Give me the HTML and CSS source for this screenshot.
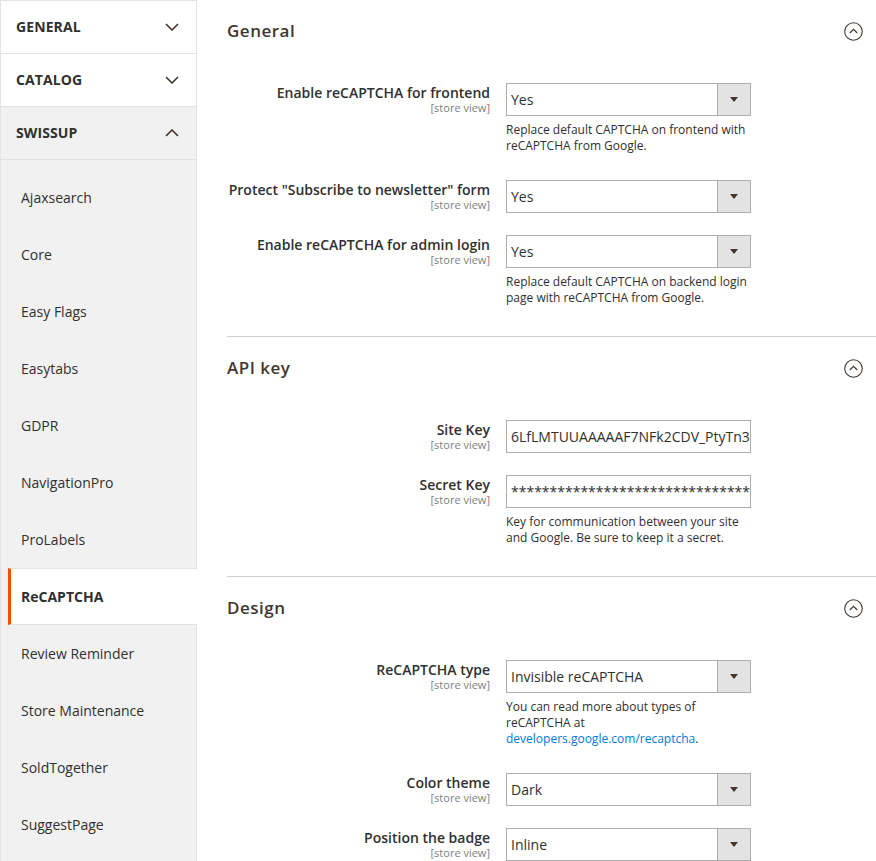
FILE: index.html
```html
<!DOCTYPE html>
<html lang="en">
<head>
<meta charset="utf-8">
<title>Configuration</title>
<link rel="stylesheet" href="styles.css">
</head>
<body>
<div class="page">
  <aside class="sidebar">
    <div class="tab">
      <span class="tab-name">GENERAL</span>
      <svg class="chev" width="14" height="8" viewBox="0 0 14 8"><path d="M1 1l6 6 6-6" fill="none" stroke="#41362f" stroke-width="1.6"/></svg>
    </div>
    <div class="tab">
      <span class="tab-name">CATALOG</span>
      <svg class="chev" width="14" height="8" viewBox="0 0 14 8"><path d="M1 1l6 6 6-6" fill="none" stroke="#41362f" stroke-width="1.6"/></svg>
    </div>
    <div class="tab tab-open">
      <span class="tab-name">SWISSUP</span>
      <svg class="chev" width="14" height="8" viewBox="0 0 14 8"><path d="M1 7l6-6 6 6" fill="none" stroke="#41362f" stroke-width="1.6"/></svg>
    </div>
    <ul class="subnav">
      <li class="item">Ajaxsearch</li>
      <li class="item">Core</li>
      <li class="item">Easy Flags</li>
      <li class="item">Easytabs</li>
      <li class="item">GDPR</li>
      <li class="item">NavigationPro</li>
      <li class="item">ProLabels</li>
      <li class="item item-active">ReCAPTCHA</li>
      <li class="item">Review Reminder</li>
      <li class="item">Store Maintenance</li>
      <li class="item">SoldTogether</li>
      <li class="item">SuggestPage</li>
    </ul>
  </aside>

  <main class="content">
    <section class="section">
      <div class="section-head">
        <h2 class="section-title">General</h2>
        <svg class="toggle" width="19" height="19" viewBox="0 0 19 19"><circle cx="9.5" cy="9.5" r="8.8" fill="none" stroke="#41362f" stroke-width="1.1"/><path d="M5.8 11l3.7-3.7 3.7 3.7" fill="none" stroke="#41362f" stroke-width="1.2"/></svg>
      </div>
      <div class="section-body">
        <div class="row">
          <div class="label"><span class="label-text">Enable reCAPTCHA for frontend</span><span class="scope">[store view]</span></div>
          <div class="control">
            <div class="select"><span class="select-value">Yes</span><span class="select-arrow"></span></div>
            <p class="note">Replace default CAPTCHA on frontend with reCAPTCHA from Google.</p>
          </div>
        </div>
        <div class="row">
          <div class="label"><span class="label-text">Protect "Subscribe to newsletter" form</span><span class="scope">[store view]</span></div>
          <div class="control">
            <div class="select"><span class="select-value">Yes</span><span class="select-arrow"></span></div>
          </div>
        </div>
        <div class="row">
          <div class="label"><span class="label-text">Enable reCAPTCHA for admin login</span><span class="scope">[store view]</span></div>
          <div class="control">
            <div class="select"><span class="select-value">Yes</span><span class="select-arrow"></span></div>
            <p class="note">Replace default CAPTCHA on backend login page with reCAPTCHA from Google.</p>
          </div>
        </div>
      </div>
    </section>

    <section class="section section-sep">
      <div class="section-head">
        <h2 class="section-title">API key</h2>
        <svg class="toggle" width="19" height="19" viewBox="0 0 19 19"><circle cx="9.5" cy="9.5" r="8.8" fill="none" stroke="#41362f" stroke-width="1.1"/><path d="M5.8 11l3.7-3.7 3.7 3.7" fill="none" stroke="#41362f" stroke-width="1.2"/></svg>
      </div>
      <div class="section-body">
        <div class="row">
          <div class="label"><span class="label-text">Site Key</span><span class="scope">[store view]</span></div>
          <div class="control">
            <div class="input">6LfLMTUUAAAAAF7NFk2CDV_PtyTn3xQwErTyUiOp</div>
          </div>
        </div>
        <div class="row">
          <div class="label"><span class="label-text">Secret Key</span><span class="scope">[store view]</span></div>
          <div class="control">
            <div class="input">****************************************</div>
            <p class="note">Key for communication between your site and Google. Be sure to keep it a secret.</p>
          </div>
        </div>
      </div>
    </section>

    <section class="section section-sep">
      <div class="section-head">
        <h2 class="section-title">Design</h2>
        <svg class="toggle" width="19" height="19" viewBox="0 0 19 19"><circle cx="9.5" cy="9.5" r="8.8" fill="none" stroke="#41362f" stroke-width="1.1"/><path d="M5.8 11l3.7-3.7 3.7 3.7" fill="none" stroke="#41362f" stroke-width="1.2"/></svg>
      </div>
      <div class="section-body">
        <div class="row">
          <div class="label"><span class="label-text">ReCAPTCHA type</span><span class="scope">[store view]</span></div>
          <div class="control">
            <div class="select"><span class="select-value">Invisible reCAPTCHA</span><span class="select-arrow"></span></div>
            <p class="note">You can read more about types of reCAPTCHA at <a class="link" href="#">developers.google.com/recaptcha</a>.</p>
          </div>
        </div>
        <div class="row">
          <div class="label"><span class="label-text">Color theme</span><span class="scope">[store view]</span></div>
          <div class="control">
            <div class="select"><span class="select-value">Dark</span><span class="select-arrow"></span></div>
          </div>
        </div>
        <div class="row">
          <div class="label"><span class="label-text">Position the badge</span><span class="scope">[store view]</span></div>
          <div class="control">
            <div class="select"><span class="select-value">Inline</span><span class="select-arrow"></span></div>
          </div>
        </div>
      </div>
    </section>
  </main>
</div>
</body>
</html>
```

FILE: styles.css
```css
* { box-sizing: border-box; }
html, body { margin: 0; padding: 0; background: #fff; }
body {
  font-family: "Open Sans", "Noto Sans", sans-serif;
  color: #303030;
  font-size: 14px;
  overflow: hidden;
}
.page {
  display: flex;
  align-items: flex-start;
  gap: 30px;
}

/* Sidebar */
.sidebar {
  width: 197px;
  flex: 0 0 197px;
  background: #f1f1f1;
  border-left: 1px solid #e3e3e3;
  border-right: 1px solid #e3e3e3;
  border-top: 1px solid #e3e3e3;
  min-height: 900px;
}
.tab {
  height: 53px;
  background: #fff;
  border-bottom: 1px solid #e3e3e3;
  display: flex;
  align-items: center;
  justify-content: space-between;
  padding: 0 17px 2px 15px;
}
.tab-open { background: #f1f1f1; }
.tab-name {
  font-weight: 700;
  font-size: 14px;
  color: #303030;
  letter-spacing: 0.1px;
}
.chev { display: block; margin-top: 1px; }
.subnav {
  list-style: none;
  margin: 0;
  padding: 9px 0 0 7px;
}
.item {
  height: 57px;
  display: flex;
  align-items: center;
  padding-left: 13px;
  border-top: 1px solid transparent;
  border-bottom: 1px solid transparent;
  font-size: 14px;
  color: #303030;
}
.item-active {
  background: #fff;
  border-top-color: #e3e3e3;
  border-bottom-color: #e3e3e3;
  border-left: 3px solid #eb5202;
  padding-left: 10px;
  margin-right: -1px;
  font-weight: 700;
}

/* Content */
.content {
  flex: 1;
  min-width: 0;
}
.section-sep { border-top: 1px solid #d1d1d1; }
.section-head {
  height: 62px;
  display: flex;
  align-items: center;
  justify-content: space-between;
  padding: 0 13px 2px 0;
}
.section-title {
  margin: 0;
  font-size: 17px;
  font-weight: 600;
  color: #41362f;
  letter-spacing: 0.5px;
}
.toggle { display: block; margin-top: 2px; }
.section-body {
  padding: 21px 0 26px;
  display: flex;
  flex-direction: column;
  gap: 22px;
}
.row {
  display: flex;
  gap: 16px;
}
.label {
  width: 263px;
  flex: 0 0 263px;
  display: flex;
  flex-direction: column;
  align-items: flex-end;
  text-align: right;
  white-space: nowrap;
  padding-top: 1px;
}
.label-text {
  font-size: 14px;
  font-weight: 600;
  line-height: 17px;
  color: #303030;
}
.scope {
  font-size: 11px;
  line-height: 13px;
  color: #808080;
}
.control { width: 245px; }
.select {
  height: 33px;
  border: 1px solid #adadad;
  display: flex;
  align-items: stretch;
  background: #fff;
}
.select-value {
  flex: 1;
  padding-left: 4px;
  display: flex;
  align-items: center;
  font-size: 14px;
  color: #303030;
}
.select-arrow {
  width: 33px;
  background: #e3e3e3;
  border-left: 1px solid #adadad;
  position: relative;
}
.select-arrow::after {
  content: "";
  position: absolute;
  left: 12px;
  top: 13px;
  border-left: 4px solid transparent;
  border-right: 4px solid transparent;
  border-top: 5px solid #41362f;
}
.input {
  height: 33px;
  border: 1px solid #adadad;
  padding-left: 4px;
  display: flex;
  align-items: center;
  overflow: hidden;
  white-space: nowrap;
  font-size: 14px;
  color: #303030;
}
.note {
  margin: 0 0 4px;
  padding-top: 6px;
  font-size: 12px;
  line-height: 16px;
  color: #303030;
}
.link { color: #007bdb; text-decoration: none; }
```
